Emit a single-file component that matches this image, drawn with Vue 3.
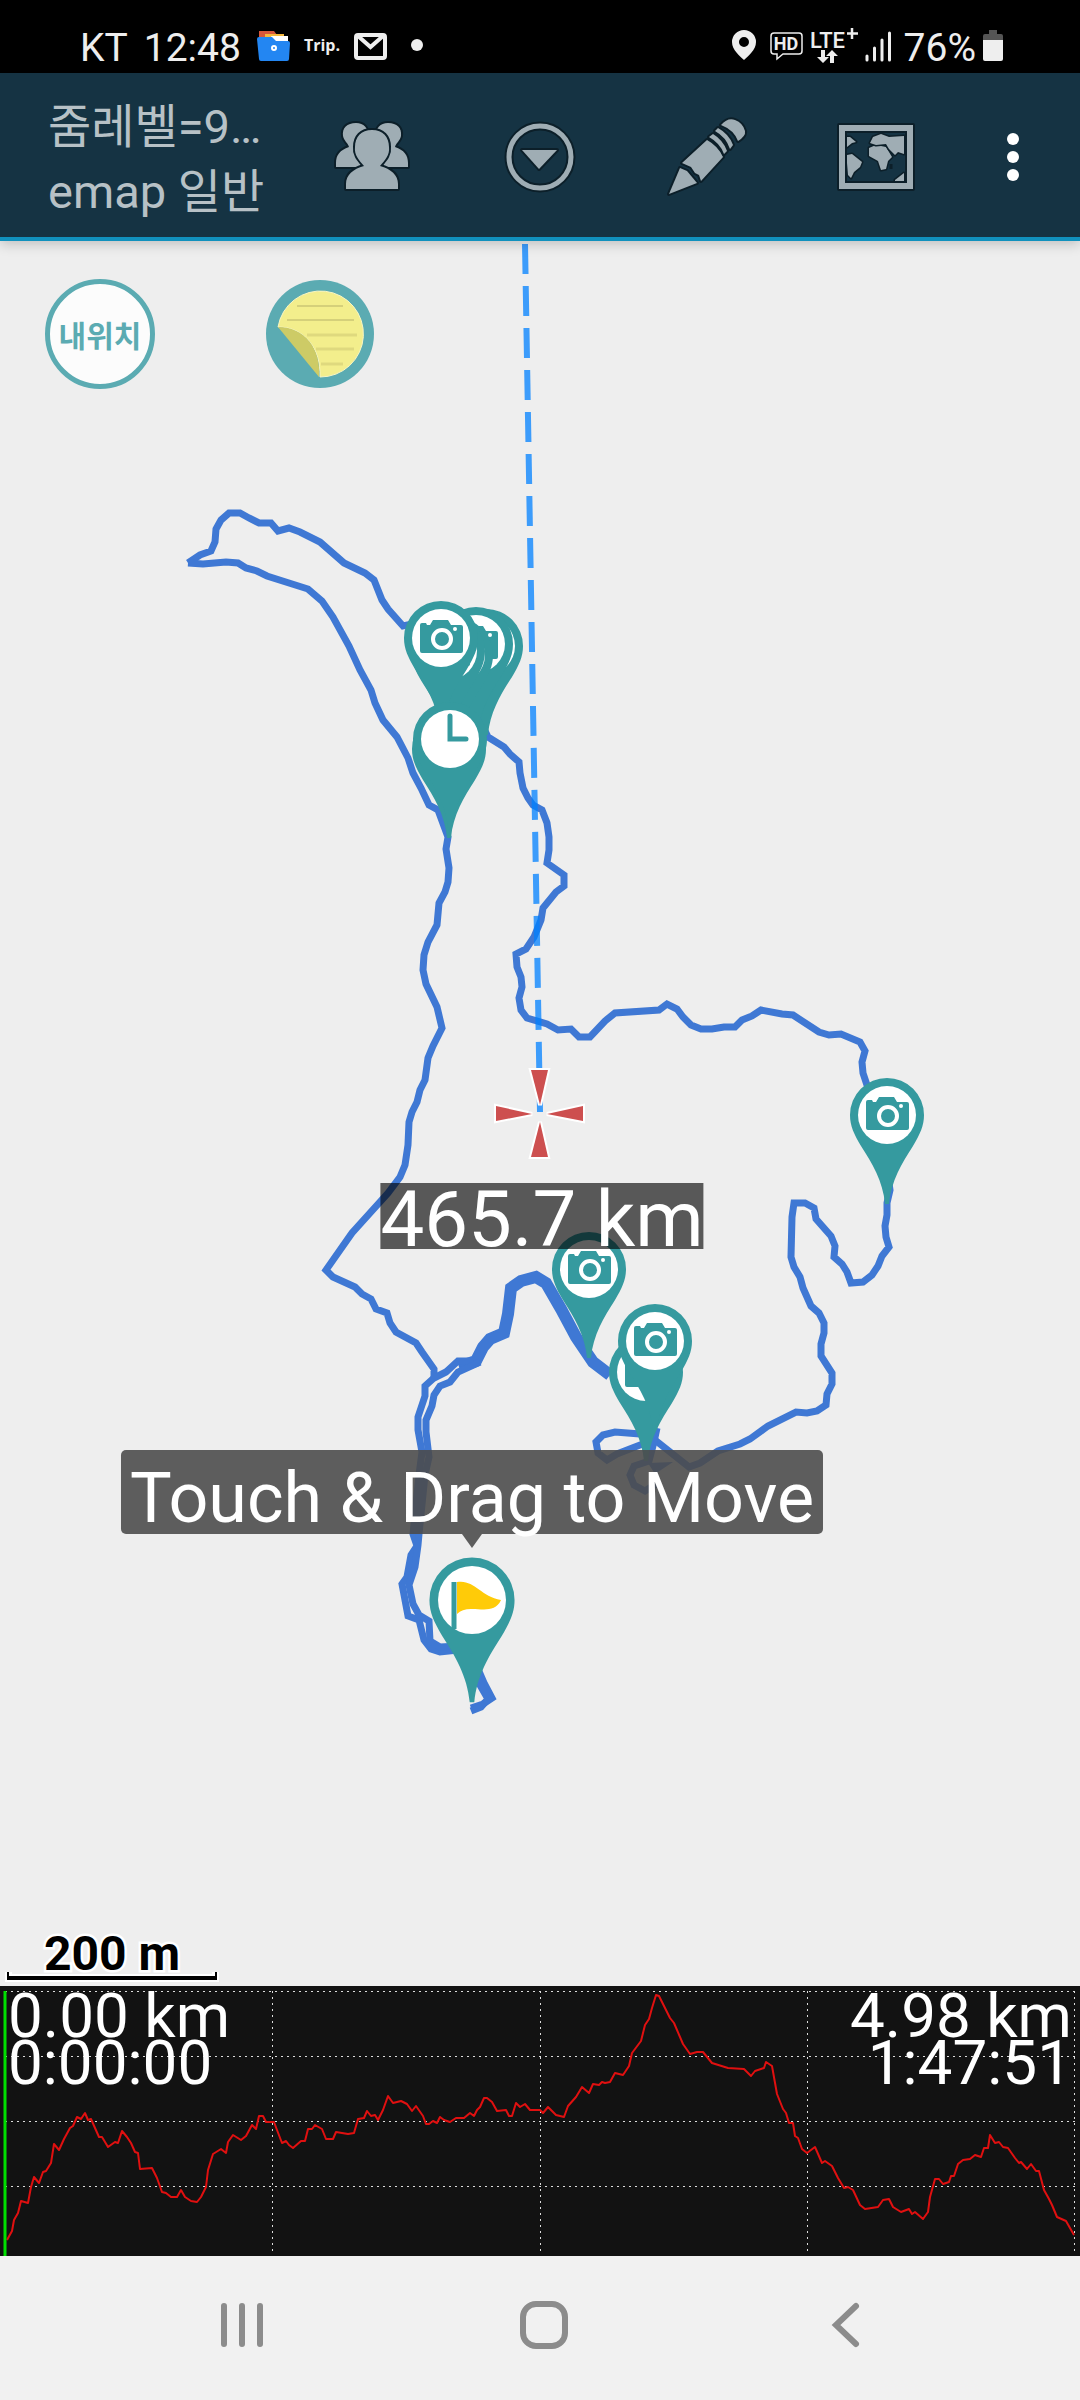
<!-- TrackMap.vue -->
<script setup>
import { ref } from "vue";

// Title shown in the action bar
const zoomTitle = ref("줌레벨=9…");
const mapName = ref("emap 일반");

// Distance from my location to the map centre
const distance = ref("465.7 km");

// Cursor (left) and total (right) values of the elevation chart
const cursor = ref({ distance: "0.00 km", time: "0:00:00" });
const total = ref({ distance: "4.98 km", time: "1:47:51" });

// Recorded track segments
const tracks = [
  {
    // start -> north loop -> east side
    id: "east",
    points:
      "188,563 200,555 211,551 215,542 216,529 221,520 229,513 240,513 249,518 259,523 271,523 278,531 289,528 300,532 320,542 344,563 365,573 374,580 382,600 388,609 403,626 440,618 470,700 488,737 504,747 510,754 519,762 520,773 523,788 528,798 533,805 542,810 547,823 549,837 549,850 547,863 564,875 564,886 556,892 543,908 541,920 534,937 526,949 516,954 517,967 521,977 522,987 519,998 521,1010 527,1018 547,1024 558,1030 571,1029 579,1037 590,1037 605,1021 615,1013 659,1010 667,1004 677,1009 683,1017 691,1025 701,1029 712,1029 724,1027 735,1027 742,1020 752,1016 761,1010 782,1014 793,1015 819,1032 829,1035 841,1034 860,1042 865,1051 862,1062 863,1073 867,1085 880,1120 890,1190 887,1203 887,1215 885,1226 886,1237 889,1247 882,1256 878,1266 872,1275 863,1282 851,1283 847,1272 842,1264 834,1257 835,1246 831,1236 816,1219 814,1208 805,1203 794,1203 792,1217 791,1257 794,1267 800,1277 803,1288 811,1306 819,1313 824,1323 824,1333 821,1344 821,1356 832,1373 832,1384 827,1394 826,1405 817,1411 807,1413 796,1412 768,1426 750,1439 740,1444 718,1451 700,1463 689,1467 655,1440 640,1434 615,1432 603,1435 596,1442 598,1453 607,1460 617,1454 640,1445 655,1440",
  },
  {
    // north loop -> west side
    id: "west",
    points:
      "188,563 203,564 226,562 238,563 246,568 257,571 267,576 289,583 308,589 322,601 333,617 349,646 360,670 371,690 375,703 383,720 397,737 408,758 413,773 421,788 429,805 438,810 448,837 446,849 449,868 448,882 445,892 439,903 437,925 428,942 424,955 423,970 426,984 437,1007 442,1028 433,1046 428,1058 425,1080 420,1090 417,1102 412,1112 409,1122 408,1145 405,1165 400,1177 388,1193 352,1233 326,1270 333,1277 355,1287 362,1294 371,1299 376,1309 387,1313 390,1323 396,1332 416,1343 422,1352 434,1369 434,1378",
  },
  {
    // shared path over the hill, walked both ways
    id: "hill",
    wide: true,
    points:
      "610,1375 593,1362 576,1337 561,1309 546,1283 536,1277 521,1281 511,1288 508,1314 504,1333 490,1339 483,1347 476,1361 459,1367",
  },
  {
    id: "out",
    points:
      "476,1361 458,1361 446,1372 434,1378 425,1386 425,1396 418,1417 418,1430 422,1452 419,1475 413,1534 417,1546 411,1555 407,1577 402,1584 408,1616 419,1620 424,1640 431,1649 440,1652 458,1650 472,1655 484,1683 492,1698 483,1704 471,1708",
  },
  {
    id: "back",
    points:
      "480,1362 458,1372 450,1382 440,1386 434,1395 432,1406 426,1420 426,1432 429,1457 425,1475 419,1534 418,1545 415,1567 409,1585 413,1604 419,1615 429,1621 430,1641 440,1647 458,1646 470,1652 480,1685 488,1699 481,1707 471,1711",
  },
  {
    // small loop around the camera pin
    id: "loop",
    points: "657,1428 654,1442 649,1461 634,1466 630,1475 634,1485 645,1491 656,1484",
  },
];

// Waypoint pins, back to front. x/y is the centre of the round head
const pins = [
  { id: 1, x: 486, y: 646, type: "camera" },
  { id: 2, x: 476, y: 644, type: "camera" },
  { id: 3, x: 456, y: 655, type: "camera" },
  { id: 4, x: 448, y: 651, type: "camera" },
  { id: 5, x: 441, y: 638, type: "camera" },
  { id: 6, x: 449, y: 749, type: "plain" },
  { id: 7, x: 450, y: 739, type: "clock" },
  { id: 8, x: 887, y: 1115, type: "camera" },
  { id: 9, x: 589, y: 1269, type: "camera" },
  { id: 10, x: 646, y: 1372, type: "camera" },
  { id: 11, x: 655, y: 1341, type: "camera" },
];

// Elevation profile
const elevation =
  "7,254 12,245 14,234 18,227 21,215 28,217 31,201 34,191 39,197 43,186 46,185 51,177 54,158 59,164 64,153 70,142 73,140 77,131 81,133 85,127 88,134 91,133 99,151 102,151 108,161 115,156 118,157 122,145 127,151 131,157 135,166 138,167 140,183 152,182 157,192 162,206 166,207 171,211 177,211 181,204 185,211 191,215 197,216 201,211 206,201 208,184 213,168 221,163 226,167 228,156 233,149 241,154 246,150 252,139 256,143 259,130 263,130 266,136 274,136 277,144 282,157 286,155 289,159 293,162 301,155 305,155 308,143 312,143 315,139 322,143 326,153 333,153 336,146 348,148 354,147 358,133 364,132 367,125 371,130 375,129 378,134 383,124 388,110 393,117 401,115 407,118 412,125 416,120 423,130 426,138 429,138 433,135 437,137 440,131 444,134 450,136 456,132 464,132 470,127 474,130 477,124 480,121 484,112 487,112 492,116 497,125 506,124 509,130 512,130 516,117 520,121 525,118 530,124 540,124 543,127 548,121 556,129 564,131 568,120 576,111 582,101 589,107 593,98 599,99 602,96 605,97 610,96 615,87 623,89 629,80 632,67 641,55 645,39 649,33 652,22 656,9 659,10 670,32 674,37 683,58 690,68 697,66 703,66 712,77 728,82 744,83 751,90 755,85 764,82 766,76 772,80 777,108 783,123 786,127 789,137 793,137 795,150 798,152 802,163 807,167 815,161 822,177 825,175 832,180 838,192 844,202 848,201 853,204 860,219 865,223 878,221 883,214 889,213 893,221 901,226 909,223 912,228 915,226 923,233 928,226 930,211 935,193 939,193 943,198 949,196 951,190 954,190 958,178 963,174 970,173 975,169 981,171 984,162 988,162 990,149 995,157 999,156 1003,161 1008,162 1015,172 1019,177 1021,176 1027,183 1031,178 1036,185 1039,185 1044,204 1049,213 1052,219 1057,231 1066,235 1074,249";
const gridRows = [5, 70, 135, 200];
const gridCols = [273, 541, 808, 1075];
</script>

<template>
  <div class="screen">
    <!-- Status bar -->
    <header class="status">
      <div class="status-group">
        <span>KT</span>
        <span class="time">12:48</span>
        <svg class="folder" width="33" height="38" viewBox="0 0 33 38">
          <path d="M2 3h15l3 4v10H2z" fill="#d8573a" />
          <path d="M8 6h19v10H8z" fill="#f4b73c" />
          <path d="M14 8h17v10H18z" fill="#fff" />
          <path d="M2 9h13l4 4h12q2 0 2 2l-1 16q0 2-2 2H4q-2 0-2-2L0 11q0-2 2-2z" fill="#2386f2" />
          <circle cx="17" cy="20" r="2" fill="none" stroke="#fff" stroke-width="2" />
        </svg>
        <span class="trip">Trip.</span>
        <svg width="33" height="38" viewBox="0 0 33 38">
          <rect x="2" y="7" width="29" height="23" rx="2" fill="none" stroke="#eee" stroke-width="4" />
          <path d="M4 8l12.500 11L29 8" fill="none" stroke="#eee" stroke-width="4" />
        </svg>
        <span class="dot"></span>
      </div>
      <div class="status-group right">
        <svg class="place" width="24" height="38" viewBox="0 0 24 38">
          <path d="M12 2a12 12 0 0 1 12 12c0 8-8 14-12 18C8 28 0 22 0 14A12 12 0 0 1 12 2zm0 7a5 5 0 1 0 0 10a5 5 0 0 0 0-10z" fill="#eee" />
        </svg>
        <svg width="33" height="38" viewBox="0 0 33 38">
          <path d="M4 5h25q3 0 3 3v15q0 3-3 3H13l-6 5v-5H4q-3 0-3-3V8q0-3 3-3z" fill="none" stroke="#eee" stroke-width="1.500" />
          <text x="16" y="22" class="hd">HD</text>
        </svg>
        <svg width="48" height="38" viewBox="0 0 48 38">
          <text x="0" y="20" class="lte">LTE</text>
          <path d="M42 0v11M37 5.500h11" stroke="#eee" stroke-width="2.500" />
          <path d="M11 22h4v7h4l-6 6l-6-6h4zM20 35h4v-7h4l-6-6l-6 6h4z" fill="#eee" />
        </svg>
        <svg width="27" height="38" viewBox="0 0 27 38">
          <path d="M2 28v4M9.500 20v12M17 12v20M24.500 5v27" stroke="#eee" stroke-width="3" stroke-linecap="round" />
        </svg>
        <span class="percent">76%</span>
        <svg width="20" height="38" viewBox="0 0 20 38">
          <path d="M6 2h8v4h4q2 0 2 2v5H0V8q0-2 2-2h4z" fill="#555" />
          <path d="M0 12h20v19q0 2-2 2H2q-2 0-2-2z" fill="#eee" />
        </svg>
      </div>
    </header>

    <!-- Action bar -->
    <nav class="action-bar">
      <h1 class="title">
        <span>{{ zoomTitle }}</span>
        <span>{{ mapName }}</span>
      </h1>
      <button class="action" aria-label="Friends">
        <svg width="84" height="84" viewBox="0 0 84 84" class="glyph">
          <path d="M26 8c8 0 12 5 12 13c0 6-2 10-5 13c0 4 6 4 8 8v10H6v-4c0-8 4-13 13-16c-1-4-5-6-6-11c-1-8 4-13 13-13z" />
          <path d="M58 8c-8 0-12 5-12 13c0 6 2 10 5 13c0 4-6 4-8 8v10h35v-4c0-8-4-13-13-16c1-4 5-6 6-11c1-8-4-13-13-13z" />
          <path d="M42 15c11 0 17 7 17 17c1 8-4 13-9 19c11 3 18 9 18 18v5H16v-5c0-9 7-15 18-18c-5-6-10-11-9-19c0-10 6-17 17-17z" />
        </svg>
      </button>
      <button class="action" aria-label="Show list">
        <svg width="84" height="84" viewBox="0 0 84 84" class="glyph">
          <circle cx="42" cy="42" r="31" class="ring-shade" />
          <circle cx="42" cy="42" r="31" class="ring" />
          <path d="M24 35h35L41 54z" />
        </svg>
      </button>
      <button class="action" aria-label="Edit">
        <svg width="84" height="84" viewBox="0 0 84 84" class="glyph">
          <path d="M3 79L14 53L21 56L26 62L31 68z" />
          <path d="M16 48L41 25Q52 31 57 42L35 66L33 60L29 58L25 52z" />
          <path d="M43 22L47 19Q57 25 61 36L58 39Q54 28 43 22z" />
          <path d="M49 16L52 13Q63 19 67 30L64 34Q60 22 49 16z" />
          <path d="M55 10Q62 2 69 5Q77 8 79 16Q80 21 72 26Q68 15 55 10z" />
        </svg>
      </button>
      <button class="action" aria-label="Map type">
        <svg width="84" height="84" viewBox="0 0 84 84" class="glyph">
          <path fill-rule="evenodd" d="M5 10h74v64H5zM11 16v52h62V16z" />
          <g class="land">
            <path d="M13 22l3 0l6 5l-4 1l-5 4z" />
            <path d="M13 40l5-1l10 8l-2 5l-6 5l-3 6l-3-3l-1-12z" />
            <path d="M35 33l7-3l10 2l6 10l-4 4l-2 8l-5 1l-3-9l-9-5z" />
            <path d="M36 28l3-6l8-3l8 3l15-1v18l-6-2l-3 3l-6-6l-3-5l-10 1z" />
            <path d="M57 49v5" />
            <path d="M61 65l9-7v8h-9z" />
          </g>
        </svg>
      </button>
      <button class="action overflow" aria-label="More options">
        <svg width="14" height="50" viewBox="0 0 14 50">
          <g fill="#fff">
            <circle cx="7" cy="7" r="6" />
            <circle cx="7" cy="25" r="6" />
            <circle cx="7" cy="43" r="6" />
          </g>
        </svg>
      </button>
    </nav>

    <!-- Map -->
    <main class="map">
      <svg class="map-canvas" viewBox="0 241 1080 1745" preserveAspectRatio="xMidYMid slice">
        <defs>
          <path id="pin-body" d="M-2 89C-4 66-15 48-26 31C-33 19-37 11-37 0A37 37 0 0 1 37 0C37 11 33 19 26 31C15 48 4 66 2 89z" />
          <g id="pin-camera">
            <use href="#pin-body" fill="#359a9f" />
            <circle r="29" fill="#fff" />
            <path d="M-21-13q0-2 2-2h4l1 2h3l3-5h15l3 5h10q2 0 2 2v24q0 2-2 2h-39q-2 0-2-2z" fill="#359a9f" />
            <circle cx="1" cy="1" r="9" fill="none" stroke="#fff" stroke-width="4" />
            <circle cx="14" cy="-9" r="2" fill="#fff" />
          </g>
          <g id="pin-clock">
            <use href="#pin-body" fill="#359a9f" />
            <circle r="29" fill="#fff" />
            <path d="M0-23V0H16" fill="none" stroke="#359a9f" stroke-width="5" stroke-linecap="round" />
          </g>
          <g id="pin-plain">
            <use href="#pin-body" fill="#359a9f" />
          </g>
        </defs>

        <polyline
          v-for="track in tracks"
          :key="track.id"
          :points="track.points"
          :class="['track', { wide: track.wide }]"
        />
        <path d="M648 1463L673 1462L655 1474z" class="heading" />

        <use
          v-for="pin in pins"
          :key="pin.id"
          :href="'#pin-' + pin.type"
          :transform="`translate(${pin.x} ${pin.y})`"
        />

        <!-- Destination flag -->
        <g transform="translate(472 1600)">
          <use href="#pin-body" fill="#359a9f" transform="scale(1.150)" />
          <circle r="34" fill="#fff" />
          <path d="M-18-18V29" stroke="#359a9f" stroke-width="5" />
          <path d="M-15-18C2-21 8-4 29 0C23 14 6 8-1 9Q-10 9-15 14z" fill="#ffcb08" />
        </g>

        <!-- Line to my location -->
        <path d="M525 244L540 1112" class="bearing" />

        <g class="cross">
          <path d="M531 1070h17l-8 35z" />
          <path d="M531 1157h17l-8-35z" />
          <path d="M496 1106v15l36-7z" />
          <path d="M583 1106v15l-36-7z" />
        </g>
      </svg>

      <div class="map-tools">
        <button class="round my-place">내위치</button>
        <button class="round" aria-label="Memo">
          <svg width="110" height="110" viewBox="0 0 110 110">
            <circle cx="55" cy="55" r="54" fill="#5babb2" />
            <path d="M13 48A43 43 0 1 1 55 98C56 70 40 48 13 48z" fill="#f3ee8c" stroke="#f8f6c4" />
            <path d="M32 27h46M22 41h67" stroke="#d5d07a" stroke-width="2" />
            <path d="M42 56h50M51 70h38M56 85h22" stroke="#dfd97e" stroke-width="3" />
            <path d="M13 48C40 48 56 70 54 98z" fill="#cdcb66" />
          </svg>
        </button>
      </div>

      <output class="distance">{{ distance }}</output>
      <div class="tooltip">Touch &amp; Drag to Move</div>

      <div class="scale">
        <span class="scale-text">200 m</span>
        <svg width="214" height="12" viewBox="0 0 214 12">
          <path d="M3 1V7H211V1" fill="none" stroke="#fff" stroke-width="8" />
          <path d="M3 1V7H211V1" fill="none" stroke="#000" stroke-width="2" />
          <path d="M2 7H212" stroke="#000" stroke-width="4" />
        </svg>
      </div>
    </main>

    <!-- Elevation chart -->
    <section class="chart">
      <svg class="chart-canvas" viewBox="0 0 1080 270" preserveAspectRatio="none">
        <g class="grid">
          <path v-for="y in gridRows" :key="'r' + y" :d="`M5 ${y}.5H1075`" />
          <path v-for="x in gridCols" :key="'c' + x" :d="`M${x - 0.5} 5V266`" />
        </g>
        <polyline :points="elevation" class="profile" />
        <path d="M5 5V270" class="cursor-line" />
      </svg>
      <div class="readout">
        <span>{{ cursor.distance }}</span>
        <span>{{ cursor.time }}</span>
      </div>
      <div class="readout end">
        <span>{{ total.distance }}</span>
        <span>{{ total.time }}</span>
      </div>
    </section>

    <!-- System navigation -->
    <footer class="system-nav">
      <button aria-label="Recent apps">
        <svg width="48" height="48" viewBox="0 0 48 48">
          <path d="M6 5v38M24 5v38M42 5v38" />
        </svg>
      </button>
      <button aria-label="Home">
        <svg width="48" height="48" viewBox="0 0 48 48">
          <rect x="3" y="3" width="42" height="42" rx="13" />
        </svg>
      </button>
      <button aria-label="Back">
        <svg width="48" height="48" viewBox="0 0 48 48">
          <path d="M34 5L14 24L34 43" />
        </svg>
      </button>
    </footer>
  </div>
</template>

<style>
body {
  margin: 0;
}
</style>

<style scoped>
.screen {
  display: flex;
  flex-direction: column;
  min-height: 100vh;
  background-color: #eee;
  font-family: Roboto, "Noto Sans CJK KR", sans-serif;
}

button {
  padding: 0;
  border: 0;
  background: none;
  font-family: inherit;
  cursor: pointer;
}

svg {
  display: block;
}

/* Status bar */
.status {
  display: flex;
  justify-content: space-between;
  height: 45px;
  padding: 28px 77px 0 80px;
  background-color: #000;
  color: #eee;
  font-size: 39px;
  line-height: 40px;
}

.status-group {
  display: flex;
  height: 38px;
  gap: 14px;
}

.status-group.right {
  gap: 7px;
}

.time {
  margin-left: 2px;
}

.folder {
  margin-left: 2px;
}

.trip {
  font-family: "Open Sans", sans-serif;
  font-size: 16px;
  font-weight: 700;
  line-height: 34px;
}

.dot {
  width: 12px;
  height: 12px;
  margin: 11px 0 0 10px;
  border-radius: 50%;
  background-color: #eee;
}

.place {
  margin-right: 7px;
}

.hd {
  fill: #eee;
  font-size: 18px;
  font-weight: 700;
  text-anchor: middle;
}

.lte {
  fill: #eee;
  font-size: 22px;
  font-weight: 500;
}

.percent {
  margin-left: 5px;
}

/* Action bar */
.action-bar {
  position: relative;
  z-index: 1;
  display: flex;
  align-items: center;
  box-sizing: border-box;
  height: 168px;
  padding: 4px 14px 0 48px;
  border-bottom: 4px solid #1191bd;
  background-color: #153343;
  box-shadow: 0 3px 12px rgba(0, 0, 0, 0.2);
}

.title {
  display: flex;
  flex: 1;
  flex-direction: column;
  min-width: 0;
  margin: 0;
  padding-top: 4px;
  color: #b7c1c6;
  font-size: 47px;
  font-weight: 400;
  line-height: 65px;
  white-space: nowrap;
}

.action {
  display: flex;
  justify-content: center;
  width: 168px;
}

.action.overflow {
  width: 106px;
}

.glyph {
  fill: #9fadb4;
  stroke: #0c1f29;
  stroke-width: 4;
  stroke-linejoin: round;
  paint-order: stroke;
}

.ring-shade {
  fill: none;
  stroke-width: 9;
}

.ring {
  fill: none;
  stroke: #9fadb4;
  stroke-width: 5;
}

.land {
  stroke-width: 3;
}

/* Map */
.map {
  position: relative;
  flex: 1;
  min-height: 600px;
  overflow: hidden;
  background-color: #eee;
}

.map-canvas {
  position: absolute;
  inset: 0;
  width: 100%;
  height: 100%;
}

.track {
  fill: none;
  stroke: #3f78d4;
  stroke-width: 7;
}

.track.wide {
  stroke-width: 12;
}

.heading {
  fill: #3f78d4;
}

.bearing {
  fill: none;
  stroke: rgba(0, 128, 255, 0.75);
  stroke-width: 6;
  stroke-dasharray: 30 12;
}

.cross {
  fill: #cd4f4f;
  stroke: #fff;
  stroke-width: 4;
  paint-order: stroke;
}

.map-tools {
  position: absolute;
  top: 38px;
  left: 45px;
  display: flex;
  gap: 110px;
}

.round {
  width: 110px;
  height: 110px;
  border-radius: 50%;
}

.my-place {
  border: 5px solid #5babb2;
  background-color: #fcfcfc;
  color: #5babb2;
  font-size: 30px;
  font-weight: 700;
}

.distance {
  position: absolute;
  top: calc(50% + 69px);
  left: calc(50% + 2px);
  transform: translateX(-50%);
  height: 66px;
  background-color: rgba(0, 0, 0, 0.63);
  color: #fff;
  font-size: 78px;
  line-height: 74px;
  white-space: nowrap;
}

.tooltip {
  position: absolute;
  top: calc(50% + 336px);
  left: calc(50% - 68px);
  transform: translateX(-50%);
  height: 84px;
  padding: 0 9px;
  border-radius: 5px;
  background-color: rgba(75, 75, 75, 0.89);
  color: #fff;
  font-size: 70px;
  line-height: 96px;
  white-space: nowrap;
}

.tooltip::after {
  content: "";
  position: absolute;
  top: 100%;
  left: 50%;
  margin-left: -10px;
  border: 10px solid transparent;
  border-top: 14px solid rgba(75, 75, 75, 0.89);
  border-bottom: 0;
}

.scale {
  position: absolute;
  bottom: 3px;
  left: 5px;
  display: flex;
  flex-direction: column;
  align-items: center;
}

.scale-text {
  height: 36px;
  color: #000;
  font-size: 48px;
  font-weight: 700;
  line-height: 38px;
  -webkit-text-stroke: 5px #fff;
  paint-order: stroke fill;
}

/* Elevation chart */
.chart {
  position: relative;
  display: flex;
  justify-content: space-between;
  box-sizing: border-box;
  height: 270px;
  padding: 6px 8px;
  background-color: #121212;
}

.chart-canvas {
  position: absolute;
  inset: 0;
  width: 100%;
  height: 100%;
}

.grid {
  fill: none;
  stroke: #ddd;
  stroke-width: 1;
  stroke-dasharray: 2 4;
}

.profile {
  fill: none;
  stroke: #e01010;
  stroke-width: 2;
  stroke-linejoin: round;
}

.cursor-line {
  stroke: #00e000;
  stroke-width: 3;
}

.readout {
  position: relative;
  display: flex;
  flex-direction: column;
  color: #fff;
  font-size: 62px;
  line-height: 47px;
}

.readout.end {
  text-align: right;
}

/* System navigation */
.system-nav {
  display: flex;
  align-items: center;
  box-sizing: border-box;
  height: 144px;
  padding: 0 83px 6px 91px;
  background-color: #f1f1f1;
}

.system-nav button {
  display: flex;
  flex: 1;
  justify-content: center;
}

.system-nav svg {
  fill: none;
  stroke: #8c8c8c;
  stroke-width: 6;
  stroke-linecap: round;
}
</style>
